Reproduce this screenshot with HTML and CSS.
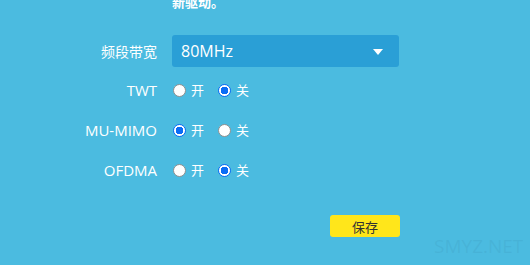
FILE: index.html
```html
<!DOCTYPE html>
<html lang="zh-CN">
<head>
<meta charset="utf-8">
<link rel="stylesheet" href="styles.css">
</head>
<body>
<div class="page">
  <div class="form">
    <div class="row note-row">
      <div class="label"></div>
      <div class="note">新驱动。</div>
    </div>
    <div class="row select-row">
      <div class="label cjk">频段带宽</div>
      <div class="select">
        <span class="select-value">80MHz</span>
        <span class="caret"></span>
      </div>
    </div>
    <div class="row">
      <div class="label">TWT</div>
      <div class="radios">
        <span class="opt"><span class="radio"></span><span class="opt-text">开</span></span>
        <span class="opt"><span class="radio checked"></span><span class="opt-text">关</span></span>
      </div>
    </div>
    <div class="row">
      <div class="label">MU-MIMO</div>
      <div class="radios">
        <span class="opt"><span class="radio checked"></span><span class="opt-text">开</span></span>
        <span class="opt"><span class="radio"></span><span class="opt-text">关</span></span>
      </div>
    </div>
    <div class="row">
      <div class="label">OFDMA</div>
      <div class="radios">
        <span class="opt"><span class="radio"></span><span class="opt-text">开</span></span>
        <span class="opt"><span class="radio checked"></span><span class="opt-text">关</span></span>
      </div>
    </div>
    <div class="row save-row">
      <div class="label"></div>
      <div class="actions"><button class="save">保存</button></div>
    </div>
  </div>
  <div class="watermark">SMYZ.NET</div>
</div>
</body>
</html>
```
FILE: styles.css
```css
html, body {
  margin: 0;
  padding: 0;
  background: #4bbbe0;
  overflow: hidden;
}
body {
  font-family: "Open Sans", "Noto Sans CJK SC", sans-serif;
  color: #ffffff;
}
.page {
  position: relative;
  width: 530px;
  height: 265px;
}
.form {
  display: flex;
  flex-direction: column;
}
.row {
  display: flex;
  align-items: center;
  height: 40px;
  column-gap: 15px;
}
.label {
  width: 157px;
  flex: none;
  text-align: right;
  font-size: 15px;
}
.cjk {
  font-family: "Noto Sans CJK SC", sans-serif;
  font-size: 14px;
}
.note-row {
  height: 17px;
  margin-top: -7px;
  margin-bottom: 22px;
  align-items: flex-start;
}
.note {
  font-family: "Noto Sans CJK SC", sans-serif;
  font-size: 13px;
  line-height: 17px;
  font-weight: bold;
}
.select-row {
  height: 38px;
}
.select {
  width: 227px;
  height: 32px;
  box-sizing: border-box;
  background: #2a9fd6;
  border-radius: 3px;
  display: flex;
  align-items: center;
  justify-content: space-between;
  padding: 0 16px 0 9px;
}
.select-value {
  font-size: 16px;
}
.caret {
  width: 0;
  height: 0;
  border-left: 5px solid transparent;
  border-right: 5px solid transparent;
  border-top: 6px solid #ffffff;
  margin-top: 1px;
}
.radios {
  display: flex;
  align-items: center;
  column-gap: 14px;
  padding-left: 1px;
}
.opt {
  display: flex;
  align-items: center;
  column-gap: 5px;
}
.radio {
  width: 13px;
  height: 13px;
  box-sizing: border-box;
  border-radius: 50%;
  background: #ffffff;
  border: 1px solid #8f8f8f;
}
.radio.checked {
  border: 1px solid #0b6cf5;
  background: radial-gradient(circle, #0b6cf5 0 3.6px, #ffffff 4px);
}
.opt-text {
  font-family: "Noto Sans CJK SC", sans-serif;
  font-size: 13px;
  line-height: 16px;
}
.save-row {
  margin-top: 25px;
  height: 22px;
}
.actions {
  width: 228px;
  display: flex;
  justify-content: flex-end;
}
.save {
  width: 70px;
  height: 22px;
  border: none;
  border-radius: 3px;
  background: #ffe61b;
  color: #333333;
  font-family: "Noto Sans CJK SC", sans-serif;
  font-size: 13px;
  padding: 0;
}
.watermark {
  position: absolute;
  left: 434px;
  top: 233px;
  font-family: "Open Sans", sans-serif;
  font-size: 19px;
  color: rgba(60, 150, 185, 0.22);
}
```
